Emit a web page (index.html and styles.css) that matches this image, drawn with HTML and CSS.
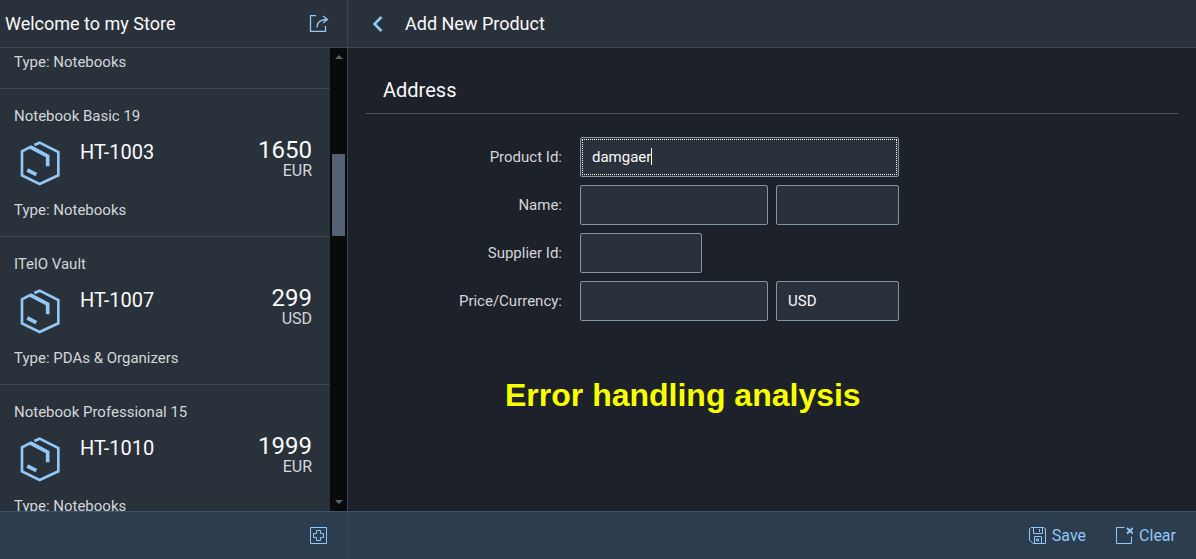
FILE: index.html
```
<!DOCTYPE html>
<html lang="en">
<head>
<meta charset="utf-8">
<title>Add New Product</title>
<link rel="stylesheet" href="styles.css">
</head>
<body>
<svg class="symbols" aria-hidden="true">
  <symbol id="product" viewBox="0 0 120 135">
    <path d="M43 12 59 5 115 33V103L59 129 6 103V31L31 18 80 43" fill="none" stroke="currentColor" stroke-width="8"/>
    <path d="M31 18 83 45V76M22 87 49 101" fill="none" stroke="currentColor" stroke-width="11"/>
  </symbol>
</svg>
<div class="app">
  <aside class="master">
    <header class="bar master-bar">
      <h1 class="title">Welcome to my Store</h1>
      <button class="icon-button" type="button" aria-label="Share">
        <svg class="icon-wide" viewBox="0 0 20 17"><path d="M7 .5H1.500V16.500H16.500V11M8 12.500C8 7 11 4.500 18 4.500M14 1 18.500 4.500 14 8" /></svg>
      </button>
    </header>
    <div class="scroller">
      <ul class="list">
        <li class="item item-tail">
          <p class="meta">Type: Notebooks</p>
        </li>
        <li class="item">
          <p class="meta">Notebook Basic 19</p>
          <div class="item-main">
            <svg class="product-icon"><use href="#product"/></svg>
            <h2 class="code">HT-1003</h2>
            <div class="price"><span class="amount">1650</span><span class="currency">EUR</span></div>
          </div>
          <p class="meta">Type: Notebooks</p>
        </li>
        <li class="item">
          <p class="meta">ITelO Vault</p>
          <div class="item-main">
            <svg class="product-icon"><use href="#product"/></svg>
            <h2 class="code">HT-1007</h2>
            <div class="price"><span class="amount">299</span><span class="currency">USD</span></div>
          </div>
          <p class="meta">Type: PDAs &amp; Organizers</p>
        </li>
        <li class="item">
          <p class="meta">Notebook Professional 15</p>
          <div class="item-main">
            <svg class="product-icon"><use href="#product"/></svg>
            <h2 class="code">HT-1010</h2>
            <div class="price"><span class="amount">1999</span><span class="currency">EUR</span></div>
          </div>
          <p class="meta">Type: Notebooks</p>
        </li>
      </ul>
      <div class="scrollbar" aria-hidden="true">
        <svg class="arrow" viewBox="0 0 8 4"><path d="M0 4 4 0 8 4Z"/></svg>
        <div class="track">
          <div class="before"></div>
          <div class="thumb"></div>
          <div class="after"></div>
        </div>
        <svg class="arrow" viewBox="0 0 8 4"><path d="M0 0 4 4 8 0Z"/></svg>
      </div>
    </div>
    <footer class="footer master-footer">
      <button class="icon-button" type="button" aria-label="Add product">
        <svg class="icon" viewBox="0 0 17 17"><path d="M.5.5H16.500V16.500H.5ZM6.500 3.500H10.500V6.500H13.500V10.500H10.500V13.500H6.500V10.500H3.500V6.500H6.500Z"/></svg>
      </button>
    </footer>
  </aside>
  <main class="detail">
    <header class="bar detail-bar">
      <button class="icon-button back" type="button" aria-label="Back">
        <svg class="chevron" viewBox="0 0 11 16"><path d="M9.500 1 2.500 8 9.500 15"/></svg>
      </button>
      <h1 class="title">Add New Product</h1>
    </header>
    <div class="content">
      <h2 class="section-title">Address</h2>
      <form class="form" id="product-form">
        <div class="row">
          <label class="label" for="pid">Product Id:</label>
          <div class="fields full">
            <input class="input focused" id="pid" type="text" value="damgaer">
            <span class="caret"></span>
          </div>
        </div>
        <div class="row">
          <label class="label" for="name">Name:</label>
          <div class="fields split">
            <input class="input" id="name" type="text">
            <input class="input" type="text" aria-label="Name, second part">
          </div>
        </div>
        <div class="row">
          <label class="label" for="supplier">Supplier Id:</label>
          <div class="fields short">
            <input class="input" id="supplier" type="text">
          </div>
        </div>
        <div class="row">
          <label class="label" for="price">Price/Currency:</label>
          <div class="fields split">
            <input class="input" id="price" type="text">
            <input class="input" type="text" value="USD" aria-label="Currency">
          </div>
        </div>
      </form>
      <p class="caption">Error handling analysis</p>
    </div>
    <footer class="footer detail-footer">
      <button class="action" type="submit" form="product-form">
        <svg class="icon" viewBox="0 0 17 17"><path d="M2 .5H15L16.500 2V16.500H4L.5 13V2ZM4.500.5V6.500H13.500V.5M10.500 2V5M5.500 16V9.500H12.500V16M7.500 12H9.500V14H7.500Z"/></svg>
        Save
      </button>
      <button class="action" type="reset" form="product-form">
        <svg class="icon" viewBox="0 0 17 17"><path d="M8.500.5H.5V16.500H15.500V9.500"/><path class="bold" d="M11 1 17 6.500M17 1 11 6.500"/></svg>
        Clear
      </button>
    </footer>
  </main>
</div>
</body>
</html>
```
FILE: styles.css
```
* { box-sizing: border-box; }

body {
  margin: 0;
  background: #1d2129;
  color: #fafafa;
  font-family: Roboto, "Noto Sans", sans-serif;
  font-size: 15px;
}

h1, h2, p, ul { margin: 0; padding: 0; font-weight: 400; }
button { border: 0; background: none; padding: 0; color: #91c8f6; font: inherit; cursor: pointer; }

.symbols { position: absolute; width: 0; height: 0; }

.app {
  display: grid;
  grid-template-columns: 348px 1fr;
  height: 100vh;
}

.master, .detail {
  display: flex;
  flex-direction: column;
  min-height: 0;
  min-width: 0;
}

.master { background: #29313a; border-right: 1px solid #3d4750; }

.bar {
  display: flex;
  align-items: center;
  flex: none;
  height: 48px;
  background: #29313a;
  border-bottom: 1px solid #3d4750;
}

.master-bar { justify-content: space-between; padding: 0 18px 0 5px; }
.detail-bar { gap: 22px; padding-left: 24px; }
.title { font-size: 18px; line-height: 24px; }

.icon-button { display: flex; }
.icon, .icon-wide, .chevron { fill: none; stroke: currentColor; stroke-width: 1; }
.icon { width: 17px; height: 17px; }
.icon-wide { width: 20px; height: 17px; stroke-width: 1.3; }
.chevron { width: 11px; height: 16px; stroke-width: 2.6; }
.bold { stroke-width: 2; }

.scroller { display: flex; flex: 1; min-height: 0; }

.list {
  flex: 1;
  overflow-y: auto;
  scrollbar-width: none;
  list-style: none;
}

.item {
  display: flex;
  flex-direction: column;
  justify-content: space-between;
  height: 148px;
  padding: 17px 18px 16px 14px;
  border-bottom: 1px solid #3d4750;
}

.item-tail { height: auto; padding-top: 4px; }

.meta { color: #d3d7d9; font-size: 15px; line-height: 20px; }

.item-main { display: flex; height: 52px; }
.product-icon { width: 40px; height: 45px; margin: 4px 20px 0 6px; color: #91c8f6; }
.code { flex: 1; font-size: 20px; line-height: 30px; }
.price { display: flex; flex-direction: column; align-items: flex-end; }
.amount { font-size: 24px; line-height: 26px; }
.currency { color: #d3d7d9; font-size: 16px; line-height: 16px; }

.scrollbar {
  display: flex;
  flex-direction: column;
  align-items: center;
  flex: none;
  width: 17px;
  padding: 7px 0;
  background: #080a0c;
}

.arrow { flex: none; width: 8px; height: 4px; fill: #596677; }
.track { display: flex; flex: 1; flex-direction: column; width: 13px; }
.before { flex: 95; }
.thumb { flex: 82; background: #556275; }
.after { flex: 264; }

.footer {
  display: flex;
  align-items: center;
  justify-content: flex-end;
  flex: none;
  height: 48px;
  background: #2c3d4f;
  border-top: 1px solid #3f5368;
}

.master-footer { padding-right: 20px; }
.detail-footer { gap: 30px; padding-right: 20px; }
.action { display: flex; align-items: center; gap: 6px; font-size: 16px; line-height: 20px; }

.content { flex: 1; min-height: 0; padding: 18px; overflow: hidden; }

.section-title {
  padding: 10px 17px 9px;
  border-bottom: 1px solid #51565f;
  font-size: 20px;
  line-height: 28px;
}

.form { display: grid; gap: 8px; padding-top: 23px; }

.row {
  display: grid;
  grid-template-columns: 196fr 319fr 261fr;
  column-gap: 18px;
  align-items: center;
}

.label { color: #d3d7d9; font-size: 15px; text-align: right; }

.fields { display: grid; column-gap: 8px; position: relative; }
.split { grid-template-columns: 188fr 123fr; }
.short { grid-template-columns: 122fr 189fr; }

.input {
  width: 100%;
  min-width: 0;
  height: 40px;
  padding: 0 11px;
  border: 1px solid #8396a8;
  border-radius: 2px;
  outline: 0;
  background: #29313a;
  color: #fafafa;
  font: inherit;
  font-size: 15px;
}

.focused { outline: 1px dotted #fff; outline-offset: -3px; }

.caret {
  position: absolute;
  top: 11px;
  left: 71px;
  width: 1px;
  height: 17px;
  background: #fff;
}

.caption {
  padding: 54px 0 0 139px;
  color: #f8ff00;
  font-family: "Liberation Sans", Arial, sans-serif;
  font-size: 32px;
  font-weight: 700;
  line-height: 40px;
}
```
